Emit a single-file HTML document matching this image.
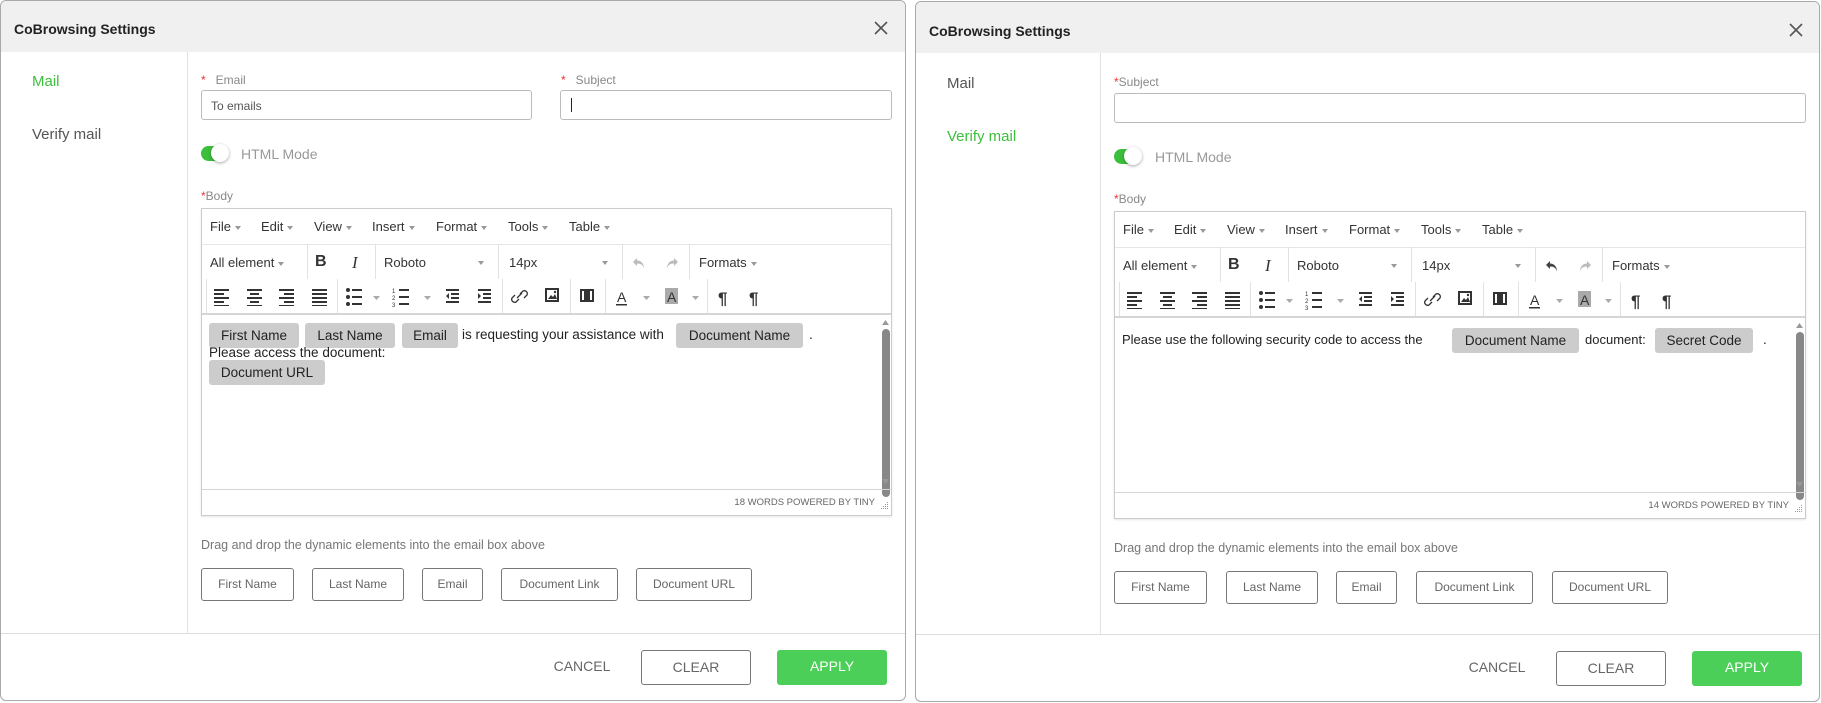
<!DOCTYPE html>
<html><head><meta charset="utf-8">
<style>
*{box-sizing:border-box;margin:0;padding:0}
body{width:1821px;height:703px;background:#fff;font-family:"Liberation Sans",Arial,sans-serif;position:relative;overflow:hidden}
.d{position:absolute;width:906px;height:701px;border:1px solid #a9a9a9;border-radius:6px;background:#fff;overflow:hidden}
.d *{position:absolute}
.d span{position:static}
.hd{left:0;top:0;width:100%;height:51px;background:#f0f0f0}
.ti{left:13px;top:20px;font-size:14px;font-weight:bold;color:#222;white-space:nowrap}
.x{left:870px;top:17px;width:20px;height:20px}
.sb{left:186px;top:51px;width:1px;height:581px;background:#e2e2e2}
.nav{font-size:15px;color:#555;white-space:nowrap}
.g{color:#3cbf3c}
.lb{font-size:12px;color:#888;white-space:nowrap}
.st{color:#e33}
.in{height:30px;border:1px solid #bbb;border-radius:3px;background:#fff;font-size:12px;color:#555;padding:8px 9px;white-space:nowrap}
.tg{width:26px;height:15px;background:#3cbf3c;border-radius:8px}
.kn{width:18px;height:18px;border-radius:50%;background:#fff;box-shadow:0 1px 3px rgba(0,0,0,.35)}
.hm{font-size:14px;color:#999;white-space:nowrap}
.ed{border:1px solid #ccc;background:#fff;box-shadow:0 1px 2px rgba(0,0,0,.1)}
.m{font-size:13px;color:#333;white-space:nowrap}
.cr{display:inline-block;width:0;height:0;border-left:3.5px solid transparent;border-right:3.5px solid transparent;border-top:4px solid #999;margin-left:4px;vertical-align:middle}
.ca{width:0;height:0;border-left:3.5px solid transparent;border-right:3.5px solid transparent;border-top:4px solid #999}
.t{font-size:13px;color:#333;white-space:nowrap}
.sp{width:1px;background:#e2e2e2}
.hl{height:1px;left:0;width:100%;background:#d5d5d5}
.ch{background:#ccc;border-radius:3px;height:25px;font-size:13.5px;color:#222;line-height:25px;text-align:center;white-space:nowrap}
.ct{font-size:13.5px;color:#222;white-space:nowrap}
.ft{font-size:9.5px;color:#666;white-space:nowrap}
.dr{font-size:12.5px;color:#777;white-space:nowrap}
.bt{height:33px;border:1px solid #777;border-radius:3px;font-size:12px;color:#666;text-align:center;line-height:31px;white-space:nowrap}
.fl{left:0;top:632px;width:100%;height:1px;background:#ddd}
.fb{height:35px;font-size:14px;text-align:center;line-height:33px;border-radius:3px}
svg{overflow:visible}
</style></head><body>

<!-- LEFT DIALOG -->
<div class="d" style="left:0;top:0">
 <div class="hd"></div>
 <div class="ti">CoBrowsing Settings</div>
 <svg class="x" viewBox="0 0 20 20"><path d="M4 4L16 16M16 4L4 16" stroke="#555" stroke-width="1.6"/></svg>
 <div class="sb"></div>
 <div class="nav g" style="left:31px;top:72px">Mail</div>
 <div class="nav" style="left:31px;top:125px">Verify mail</div>
 <div class="lb" style="left:200px;top:72px"><span class="st">*</span>&nbsp;&nbsp;&nbsp;Email</div>
 <div class="lb" style="left:560px;top:72px"><span class="st">*</span>&nbsp;&nbsp;&nbsp;Subject</div>
 <div class="in" style="left:200px;top:89px;width:331px">To emails</div>
 <div class="in" style="left:559px;top:89px;width:332px"><div style="left:10px;top:7px;width:1px;height:14px;background:#222"></div></div>
 <div class="tg" style="left:200px;top:145px"></div><div class="kn" style="left:210px;top:143px"></div>
 <div class="hm" style="left:240px;top:145px">HTML Mode</div>
 <div class="lb" style="left:200px;top:188px"><span class="st">*</span>Body</div>
 <div class="ed" style="left:200px;top:207px;width:691px;height:308px">
  <div class="m" style="left:8px;top:10px">File<span class="cr"></span></div>
  <div class="m" style="left:59px;top:10px">Edit<span class="cr"></span></div>
  <div class="m" style="left:112px;top:10px">View<span class="cr"></span></div>
  <div class="m" style="left:170px;top:10px">Insert<span class="cr"></span></div>
  <div class="m" style="left:234px;top:10px">Format<span class="cr"></span></div>
  <div class="m" style="left:306px;top:10px">Tools<span class="cr"></span></div>
  <div class="m" style="left:367px;top:10px">Table<span class="cr"></span></div>
  <div class="hl" style="top:35px;background:#e6e6e6"></div>
  <div class="t" style="left:8px;top:46px">All element<span class="cr"></span></div>
  <div class="sp" style="left:105px;top:35px;height:35px"></div>
  <div class="t" style="left:113px;top:44px;font-size:16px;font-weight:bold">B</div>
  <div class="t" style="left:150px;top:44px;font-size:17px;font-style:italic;font-family:'Liberation Serif',serif">I</div>
  <div class="sp" style="left:173px;top:35px;height:35px"></div>
  <div class="t" style="left:182px;top:46px">Roboto</div><div class="ca" style="left:276px;top:52px"></div>
  <div class="sp" style="left:296px;top:35px;height:35px"></div>
  <div class="t" style="left:307px;top:46px">14px</div><div class="ca" style="left:400px;top:52px"></div>
  <div class="sp" style="left:420px;top:35px;height:35px"></div>
  <svg style="left:430px;top:47px" width="14" height="14" viewBox="0 0 14 14"><path d="M5 2L1 6l4 4V7.5c4 0 6 1.5 7 5 0-5-3-8-7-8z" fill="#bbb"/></svg>
  <svg style="left:463px;top:47px" width="14" height="14" viewBox="0 0 14 14"><path d="M9 2l4 4-4 4V7.5c-4 0-6 1.5-7 5 0-5 3-8 7-8z" fill="#bbb"/></svg>
  <div class="sp" style="left:487px;top:35px;height:35px"></div>
  <div class="t" style="left:497px;top:46px">Formats<span class="cr"></span></div>
  <svg style="left:0;top:70px" width="691" height="34" viewBox="0 0 691 34">
   <g fill="#333">
    <path d="M12 10h15v2H12zM12 14h10v2H12zM12 18h15v2H12zM12 22h10v2H12zM12 26h15v1H12z"/>
    <path d="M45 10h15v2H45zM48 14h9v2h-9zM45 18h15v2H45zM48 22h9v2h-9zM45 26h15v1H45z"/>
    <path d="M77 10h15v2H77zM82 14h10v2H82zM77 18h15v2H77zM82 22h10v2H82zM77 26h15v1H77z"/>
    <path d="M110 10h15v2h-15zM110 14h15v2h-15zM110 18h15v2h-15zM110 22h15v2h-15zM110 26h15v1h-15z"/>
    <circle cx="146" cy="11" r="2"/><circle cx="146" cy="18" r="2"/><circle cx="146" cy="25" r="2"/>
    <path d="M150 10h10v2h-10zM150 17h10v2h-10zM150 24h10v2h-10z"/>
    <path d="M197 10h10v2h-10zM197 17h10v2h-10zM197 24h10v2h-10z"/>
    <text x="190" y="14" font-size="6" font-family="Liberation Sans">1</text><text x="190" y="21" font-size="6" font-family="Liberation Sans">2</text><text x="190" y="28" font-size="6" font-family="Liberation Sans">3</text>
    <path d="M244 10h13v2h-13zM249 14h8v2h-8zM249 18h8v2h-8zM244 22h13v2h-13zM247 14v6l-3-3z"/>
    <path d="M276 10h13v2h-13zM281 14h8v2h-8zM281 18h8v2h-8zM276 22h13v2h-13zM276 14v6l3-3z"/>
    <path d="M343 9h14v14h-14zM345 11v10h10V11z"/><path d="M346 20l3-4 2 2 2-3 2 5z"/><circle cx="353" cy="13" r="1.2"/>
    <path d="M378 10h14v13h-14zM380 12v9h2v-9zM388 12v9h2v-9zM384 13l3 3-3 3z"/>
    <text x="415" y="23" font-size="14" font-family="Liberation Sans">A</text><path d="M414 25h11v1.5h-11z"/>
    <path d="M463 9h13v16h-13z" fill="#aaa"/><text x="465" y="23" font-size="14" font-family="Liberation Sans" fill="#333">A</text>
    <text x="516" y="25" font-size="17" font-weight="bold" font-family="Liberation Sans">¶</text>
    <text x="547" y="25" font-size="17" font-weight="bold" font-family="Liberation Sans">¶</text>
   </g>
   <path d="M317 20l-3 3a3 3 0 0 1-4-4l3-3M318 15l3-3a3 3 0 0 1 4 4l-3 3M315 19l5-5" stroke="#333" stroke-width="1.3" fill="none"/>
   <g fill="#aaa"><path d="M171 17h7l-3.5 4zM222 17h7l-3.5 4zM441 17h7l-3.5 4zM490 17h7l-3.5 4z"/></g>
   <g fill="#e2e2e2"><rect x="4" y="0" width="1" height="34"/><rect x="135" y="0" width="1" height="34"/><rect x="300" y="0" width="1" height="34"/><rect x="368" y="0" width="1" height="34"/><rect x="403" y="0" width="1" height="34"/><rect x="505" y="0" width="1" height="34"/></g>
  </svg>
  <div class="hl" style="top:104px;height:2px"></div>
  <div class="ch" style="left:7px;top:114px;width:90px">First Name</div>
  <div class="ch" style="left:103px;top:114px;width:90px">Last Name</div>
  <div class="ch" style="left:200px;top:114px;width:56px">Email</div>
  <div class="ct" style="left:260px;top:118px">is requesting your assistance with</div>
  <div class="ch" style="left:474px;top:114px;width:127px">Document Name</div>
  <div class="ct" style="left:607px;top:118px">.</div>
  <div class="ct" style="left:7px;top:136px">Please access the document:</div>
  <div class="ch" style="left:7px;top:151px;width:116px">Document URL</div>
  <svg style="left:679px;top:108px" width="9" height="104"><path d="M1 8l3.5-5 3.5 5z" fill="#999"/></svg>
  <div style="left:680px;top:120px;width:8px;height:168px;background:#888;border-radius:4px"></div>
  <svg style="left:679px;top:268px" width="9" height="10"><path d="M1 2l3.5 5 3.5-5z" fill="#999"/></svg>
  <div class="hl" style="top:280px"></div>
  <div class="ft" style="left:403px;top:288px;width:270px;text-align:right">18 WORDS POWERED BY TINY</div>
  <svg style="left:679px;top:293px" width="8" height="8"><g fill="#999"><rect x="6" y="0" width="1" height="1"/><rect x="4" y="2" width="1" height="1"/><rect x="6" y="2" width="1" height="1"/><rect x="2" y="4" width="1" height="1"/><rect x="4" y="4" width="1" height="1"/><rect x="6" y="4" width="1" height="1"/><rect x="0" y="6" width="1" height="1"/><rect x="2" y="6" width="1" height="1"/><rect x="4" y="6" width="1" height="1"/><rect x="6" y="6" width="1" height="1"/></g></svg>
 </div>
 <div class="dr" style="left:200px;top:537px">Drag and drop the dynamic elements into the email box above</div>
 <div class="bt" style="left:200px;top:567px;width:93px">First Name</div>
 <div class="bt" style="left:311px;top:567px;width:92px">Last Name</div>
 <div class="bt" style="left:421px;top:567px;width:61px">Email</div>
 <div class="bt" style="left:500px;top:567px;width:117px">Document Link</div>
 <div class="bt" style="left:635px;top:567px;width:116px">Document URL</div>
 <div class="fl"></div>
 <div class="fb" style="left:541px;top:649px;width:80px;color:#666">CANCEL</div>
 <div class="fb" style="left:640px;top:649px;width:110px;border:1px solid #777;color:#666">CLEAR</div>
 <div class="fb" style="left:776px;top:649px;width:110px;background:#4ccf58;color:#fff">APPLY</div>
</div>

<!-- RIGHT DIALOG -->
<div class="d" style="left:915px;top:1px;width:905px">
 <div class="hd"></div>
 <div class="ti" style="top:21px">CoBrowsing Settings</div>
 <svg class="x" viewBox="0 0 20 20" style="top:18px"><path d="M4 4L16 16M16 4L4 16" stroke="#555" stroke-width="1.6"/></svg>
 <div class="sb" style="left:184px"></div>
 <div class="nav" style="left:31px;top:73px">Mail</div>
 <div class="nav g" style="left:31px;top:126px">Verify mail</div>
 <div class="lb" style="left:198px;top:73px"><span class="st">*</span>Subject</div>
 <div class="in" style="left:198px;top:91px;width:692px"></div>
 <div class="tg" style="left:198px;top:147px"></div><div class="kn" style="left:208px;top:145px"></div>
 <div class="hm" style="left:239px;top:147px">HTML Mode</div>
 <div class="lb" style="left:198px;top:190px"><span class="st">*</span>Body</div>
 <div class="ed" style="left:198px;top:209px;width:692px;height:308px">
  <div class="m" style="left:8px;top:10px">File<span class="cr"></span></div>
  <div class="m" style="left:59px;top:10px">Edit<span class="cr"></span></div>
  <div class="m" style="left:112px;top:10px">View<span class="cr"></span></div>
  <div class="m" style="left:170px;top:10px">Insert<span class="cr"></span></div>
  <div class="m" style="left:234px;top:10px">Format<span class="cr"></span></div>
  <div class="m" style="left:306px;top:10px">Tools<span class="cr"></span></div>
  <div class="m" style="left:367px;top:10px">Table<span class="cr"></span></div>
  <div class="hl" style="top:35px;background:#e6e6e6"></div>
  <div class="t" style="left:8px;top:46px">All element<span class="cr"></span></div>
  <div class="sp" style="left:105px;top:35px;height:35px"></div>
  <div class="t" style="left:113px;top:44px;font-size:16px;font-weight:bold">B</div>
  <div class="t" style="left:150px;top:44px;font-size:17px;font-style:italic;font-family:'Liberation Serif',serif">I</div>
  <div class="sp" style="left:173px;top:35px;height:35px"></div>
  <div class="t" style="left:182px;top:46px">Roboto</div><div class="ca" style="left:276px;top:52px"></div>
  <div class="sp" style="left:296px;top:35px;height:35px"></div>
  <div class="t" style="left:307px;top:46px">14px</div><div class="ca" style="left:400px;top:52px"></div>
  <div class="sp" style="left:420px;top:35px;height:35px"></div>
  <svg style="left:430px;top:47px" width="14" height="14" viewBox="0 0 14 14"><path d="M5 2L1 6l4 4V7.5c4 0 6 1.5 7 5 0-5-3-8-7-8z" fill="#444"/></svg>
  <svg style="left:463px;top:47px" width="14" height="14" viewBox="0 0 14 14"><path d="M9 2l4 4-4 4V7.5c-4 0-6 1.5-7 5 0-5 3-8 7-8z" fill="#bbb"/></svg>
  <div class="sp" style="left:487px;top:35px;height:35px"></div>
  <div class="t" style="left:497px;top:46px">Formats<span class="cr"></span></div>
  <svg style="left:0;top:70px" width="692" height="34" viewBox="0 0 692 34">
   <g fill="#333">
    <path d="M12 10h15v2H12zM12 14h10v2H12zM12 18h15v2H12zM12 22h10v2H12zM12 26h15v1H12z"/>
    <path d="M45 10h15v2H45zM48 14h9v2h-9zM45 18h15v2H45zM48 22h9v2h-9zM45 26h15v1H45z"/>
    <path d="M77 10h15v2H77zM82 14h10v2H82zM77 18h15v2H77zM82 22h10v2H82zM77 26h15v1H77z"/>
    <path d="M110 10h15v2h-15zM110 14h15v2h-15zM110 18h15v2h-15zM110 22h15v2h-15zM110 26h15v1h-15z"/>
    <circle cx="146" cy="11" r="2"/><circle cx="146" cy="18" r="2"/><circle cx="146" cy="25" r="2"/>
    <path d="M150 10h10v2h-10zM150 17h10v2h-10zM150 24h10v2h-10z"/>
    <path d="M197 10h10v2h-10zM197 17h10v2h-10zM197 24h10v2h-10z"/>
    <text x="190" y="14" font-size="6" font-family="Liberation Sans">1</text><text x="190" y="21" font-size="6" font-family="Liberation Sans">2</text><text x="190" y="28" font-size="6" font-family="Liberation Sans">3</text>
    <path d="M244 10h13v2h-13zM249 14h8v2h-8zM249 18h8v2h-8zM244 22h13v2h-13zM247 14v6l-3-3z"/>
    <path d="M276 10h13v2h-13zM281 14h8v2h-8zM281 18h8v2h-8zM276 22h13v2h-13zM276 14v6l3-3z"/>
    <path d="M343 9h14v14h-14zM345 11v10h10V11z"/><path d="M346 20l3-4 2 2 2-3 2 5z"/><circle cx="353" cy="13" r="1.2"/>
    <path d="M378 10h14v13h-14zM380 12v9h2v-9zM388 12v9h2v-9zM384 13l3 3-3 3z"/>
    <text x="415" y="23" font-size="14" font-family="Liberation Sans">A</text><path d="M414 25h11v1.5h-11z"/>
    <path d="M463 9h13v16h-13z" fill="#aaa"/><text x="465" y="23" font-size="14" font-family="Liberation Sans" fill="#333">A</text>
    <text x="516" y="25" font-size="17" font-weight="bold" font-family="Liberation Sans">¶</text>
    <text x="547" y="25" font-size="17" font-weight="bold" font-family="Liberation Sans">¶</text>
   </g>
   <path d="M317 20l-3 3a3 3 0 0 1-4-4l3-3M318 15l3-3a3 3 0 0 1 4 4l-3 3M315 19l5-5" stroke="#333" stroke-width="1.3" fill="none"/>
   <g fill="#aaa"><path d="M171 17h7l-3.5 4zM222 17h7l-3.5 4zM441 17h7l-3.5 4zM490 17h7l-3.5 4z"/></g>
   <g fill="#e2e2e2"><rect x="4" y="0" width="1" height="34"/><rect x="135" y="0" width="1" height="34"/><rect x="300" y="0" width="1" height="34"/><rect x="368" y="0" width="1" height="34"/><rect x="403" y="0" width="1" height="34"/><rect x="505" y="0" width="1" height="34"/></g>
  </svg>
  <div class="hl" style="top:104px;height:2px"></div>
  <div class="ct" style="left:7px;top:120px;font-size:13px">Please use the following security code to access the</div>
  <div class="ch" style="left:337px;top:116px;width:127px">Document Name</div>
  <div class="ct" style="left:470px;top:120px;font-size:13px">document:</div>
  <div class="ch" style="left:540px;top:116px;width:98px">Secret Code</div>
  <div class="ct" style="left:648px;top:120px">.</div>
  <svg style="left:680px;top:108px" width="9" height="104"><path d="M1 8l3.5-5 3.5 5z" fill="#999"/></svg>
  <div style="left:681px;top:120px;width:8px;height:168px;background:#888;border-radius:4px"></div>
  <svg style="left:680px;top:268px" width="9" height="10"><path d="M1 2l3.5 5 3.5-5z" fill="#999"/></svg>
  <div class="hl" style="top:280px"></div>
  <div class="ft" style="left:404px;top:288px;width:270px;text-align:right">14 WORDS POWERED BY TINY</div>
  <svg style="left:680px;top:293px" width="8" height="8"><g fill="#999"><rect x="6" y="0" width="1" height="1"/><rect x="4" y="2" width="1" height="1"/><rect x="6" y="2" width="1" height="1"/><rect x="2" y="4" width="1" height="1"/><rect x="4" y="4" width="1" height="1"/><rect x="6" y="4" width="1" height="1"/><rect x="0" y="6" width="1" height="1"/><rect x="2" y="6" width="1" height="1"/><rect x="4" y="6" width="1" height="1"/><rect x="6" y="6" width="1" height="1"/></g></svg>
 </div>
 <div class="dr" style="left:198px;top:539px">Drag and drop the dynamic elements into the email box above</div>
 <div class="bt" style="left:198px;top:569px;width:93px">First Name</div>
 <div class="bt" style="left:310px;top:569px;width:92px">Last Name</div>
 <div class="bt" style="left:420px;top:569px;width:61px">Email</div>
 <div class="bt" style="left:500px;top:569px;width:117px">Document Link</div>
 <div class="bt" style="left:636px;top:569px;width:116px">Document URL</div>
 <div class="fl"></div>
 <div class="fb" style="left:541px;top:649px;width:80px;color:#666">CANCEL</div>
 <div class="fb" style="left:640px;top:649px;width:110px;border:1px solid #777;color:#666">CLEAR</div>
 <div class="fb" style="left:776px;top:649px;width:110px;background:#4ccf58;color:#fff">APPLY</div>
</div>
</body></html>
